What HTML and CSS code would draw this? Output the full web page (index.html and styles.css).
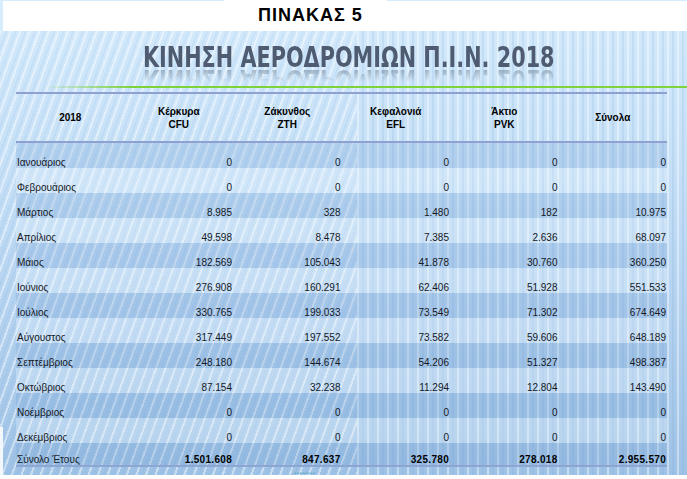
FILE: index.html
```html
<!DOCTYPE html>
<html lang="el">
<head>
<meta charset="utf-8">
<title>ΠΙΝΑΚΑΣ 5</title>
<link rel="stylesheet" href="styles.css">
</head>
<body>
<div class="slide">
  <header class="band">
    <h1 class="tag">ΠΙΝΑΚΑΣ 5</h1>
  </header>
  <main class="panel">
    <div class="title-wrap"><div class="title">ΚΙΝΗΣΗ ΑΕΡΟΔΡΟΜΙΩΝ Π.Ι.Ν. 2018</div></div>
    <div class="green"></div>
    <table class="data">
      <thead>
        <tr>
          <th>2018</th>
          <th>Κέρκυρα<br>CFU</th>
          <th>Ζάκυνθος<br>ZTH</th>
          <th>Κεφαλονιά<br>EFL</th>
          <th>Άκτιο<br>PVK</th>
          <th>Σύνολα</th>
        </tr>
      </thead>
      <tbody>
        <tr class="odd"><td>Ιανουάριος</td><td>0</td><td>0</td><td>0</td><td>0</td><td>0</td></tr>
        <tr class="even"><td>Φεβρουάριος</td><td>0</td><td>0</td><td>0</td><td>0</td><td>0</td></tr>
        <tr class="odd"><td>Μάρτιος</td><td>8.985</td><td>328</td><td>1.480</td><td>182</td><td>10.975</td></tr>
        <tr class="even"><td>Απρίλιος</td><td>49.598</td><td>8.478</td><td>7.385</td><td>2.636</td><td>68.097</td></tr>
        <tr class="odd"><td>Μάιος</td><td>182.569</td><td>105.043</td><td>41.878</td><td>30.760</td><td>360.250</td></tr>
        <tr class="even"><td>Ιούνιος</td><td>276.908</td><td>160.291</td><td>62.406</td><td>51.928</td><td>551.533</td></tr>
        <tr class="odd"><td>Ιούλιος</td><td>330.765</td><td>199.033</td><td>73.549</td><td>71.302</td><td>674.649</td></tr>
        <tr class="even"><td>Αύγουστος</td><td>317.449</td><td>197.552</td><td>73.582</td><td>59.606</td><td>648.189</td></tr>
        <tr class="odd"><td>Σεπτέμβριος</td><td>248.180</td><td>144.674</td><td>54.206</td><td>51.327</td><td>498.387</td></tr>
        <tr class="even"><td>Οκτώβριος</td><td>87.154</td><td>32.238</td><td>11.294</td><td>12.804</td><td>143.490</td></tr>
        <tr class="odd"><td>Νοέμβριος</td><td>0</td><td>0</td><td>0</td><td>0</td><td>0</td></tr>
        <tr class="even"><td>Δεκέμβριος</td><td>0</td><td>0</td><td>0</td><td>0</td><td>0</td></tr>
        <tr class="odd total"><td>Σύνολο Έτους</td><td>1.501.608</td><td>847.637</td><td>325.780</td><td>278.018</td><td>2.955.570</td></tr>
      </tbody>
    </table>
    <div class="foot">▪▪▪▪▪▪▪▪</div>
  </main>
</div>
</body>
</html>
```

FILE: styles.css
```css
html, body {
  margin: 0;
  padding: 0;
}
body {
  width: 687px;
  height: 479px;
  overflow: hidden;
  background: #ffffff;
  font-family: "Liberation Sans", Arial, sans-serif;
}
.slide {
  width: 687px;
  height: 479px;
  overflow: hidden;
  display: flex;
  flex-direction: column;
}
.band {
  box-sizing: border-box;
  height: 31px;
  flex: none;
  border-left: 3px solid #d8edfb;
  background:
    linear-gradient(to right, #d6ecfc 0 221px, #ffffff 221px 384px, #d6ecfc 384px) top left / 100% 1px no-repeat,
    #ffffff;
}
.tag {
  margin: 0;
  padding-left: 255px;
  font-family: "Liberation Sans", Arial, sans-serif;
  font-weight: bold;
  font-size: 18px;
  letter-spacing: 1px;
  line-height: 31px;
  color: #000000;
}
.panel {
  flex: 1;
  position: relative;
  background:
    linear-gradient(#ffffff, #ffffff) left bottom / 100% 4px no-repeat,
    linear-gradient(#f2f7fb, #f2f7fb) left bottom / 3px 52px no-repeat,
    repeating-linear-gradient(110deg, rgba(255,255,255,0.45) 0 2px, rgba(255,255,255,0) 2px 5px, rgba(120,160,210,0.10) 5px 7px, rgba(255,255,255,0) 7px 9px) left top / 52% 100% no-repeat,
    repeating-linear-gradient(90deg, rgba(255,255,255,0.40) 0 2px, rgba(255,255,255,0) 2px 5px, rgba(120,160,210,0.16) 5px 7px, rgba(255,255,255,0) 7px 10px) right top / 48% 100% no-repeat,
    linear-gradient(to bottom, #d2e9fb 0%, #c3def6 35%, #b2d1ef 65%, #9ec2e5 100%);
}
.title-wrap {
  margin-top: 13px;
  padding-left: 143px;
  height: 28px;
}
.title {
  display: inline-block;
  font-family: "DejaVu Sans Condensed", "DejaVu Sans", sans-serif;
  font-weight: bold;
  font-size: 28px;
  line-height: 28px;
  color: #4e5b70;
  white-space: nowrap;
  transform: scaleX(0.825);
  transform-origin: left top;
  -webkit-box-reflect: below -7px linear-gradient(to bottom, rgba(0,0,0,0) 40%, rgba(0,0,0,0.55));
}
.green {
  margin-top: 14px;
  margin-left: 43px;
  height: 2px;
  background: linear-gradient(to right, rgba(126,210,58,0), #7ed23a 90px, #80d33c);
}
.data {
  margin-top: 4px;
  margin-left: 16px;
  width: 651px;
  table-layout: fixed;
  border-collapse: separate;
  border-spacing: 0;
  color: #14181f;
}
.data th {
  height: 47px;
  padding: 0;
  border-top: 2px solid #8ea1d0;
  border-bottom: 2px solid #8ea1d0;
  font-family: "Liberation Sans", Arial, sans-serif;
  font-weight: bold;
  font-size: 10px;
  line-height: 13px;
  text-align: center;
  vertical-align: middle;
  color: #000000;
}
.data tr.odd,
.data tr.even {
  height: 25px;
}
.data tr.odd td {
  background: rgba(110, 155, 210, 0.24);
}
.data tr.even td {
  background: rgba(240, 250, 255, 0.30);
}
.data td {
  padding: 0 1px 0 1px;
  font-size: 10px;
  line-height: 10px;
  vertical-align: bottom;
  text-align: right;
  white-space: nowrap;
}
.data td:first-child {
  text-align: left;
}
.data tr.total {
  height: 24px;
}
.data tr.total td {
  border-bottom: 2px solid #8ea4d2;
  font-weight: bold;
  letter-spacing: 0.3px;
  color: #000000;
}
.data tr.total td:first-child {
  font-weight: normal;
  letter-spacing: 0;
  color: #1a1f2a;
}
.foot {
  margin-top: 3px;
  padding-left: 294px;
  font-size: 6px;
  line-height: 6px;
  letter-spacing: 0.5px;
  color: rgba(70, 160, 190, 0.7);
}
```
